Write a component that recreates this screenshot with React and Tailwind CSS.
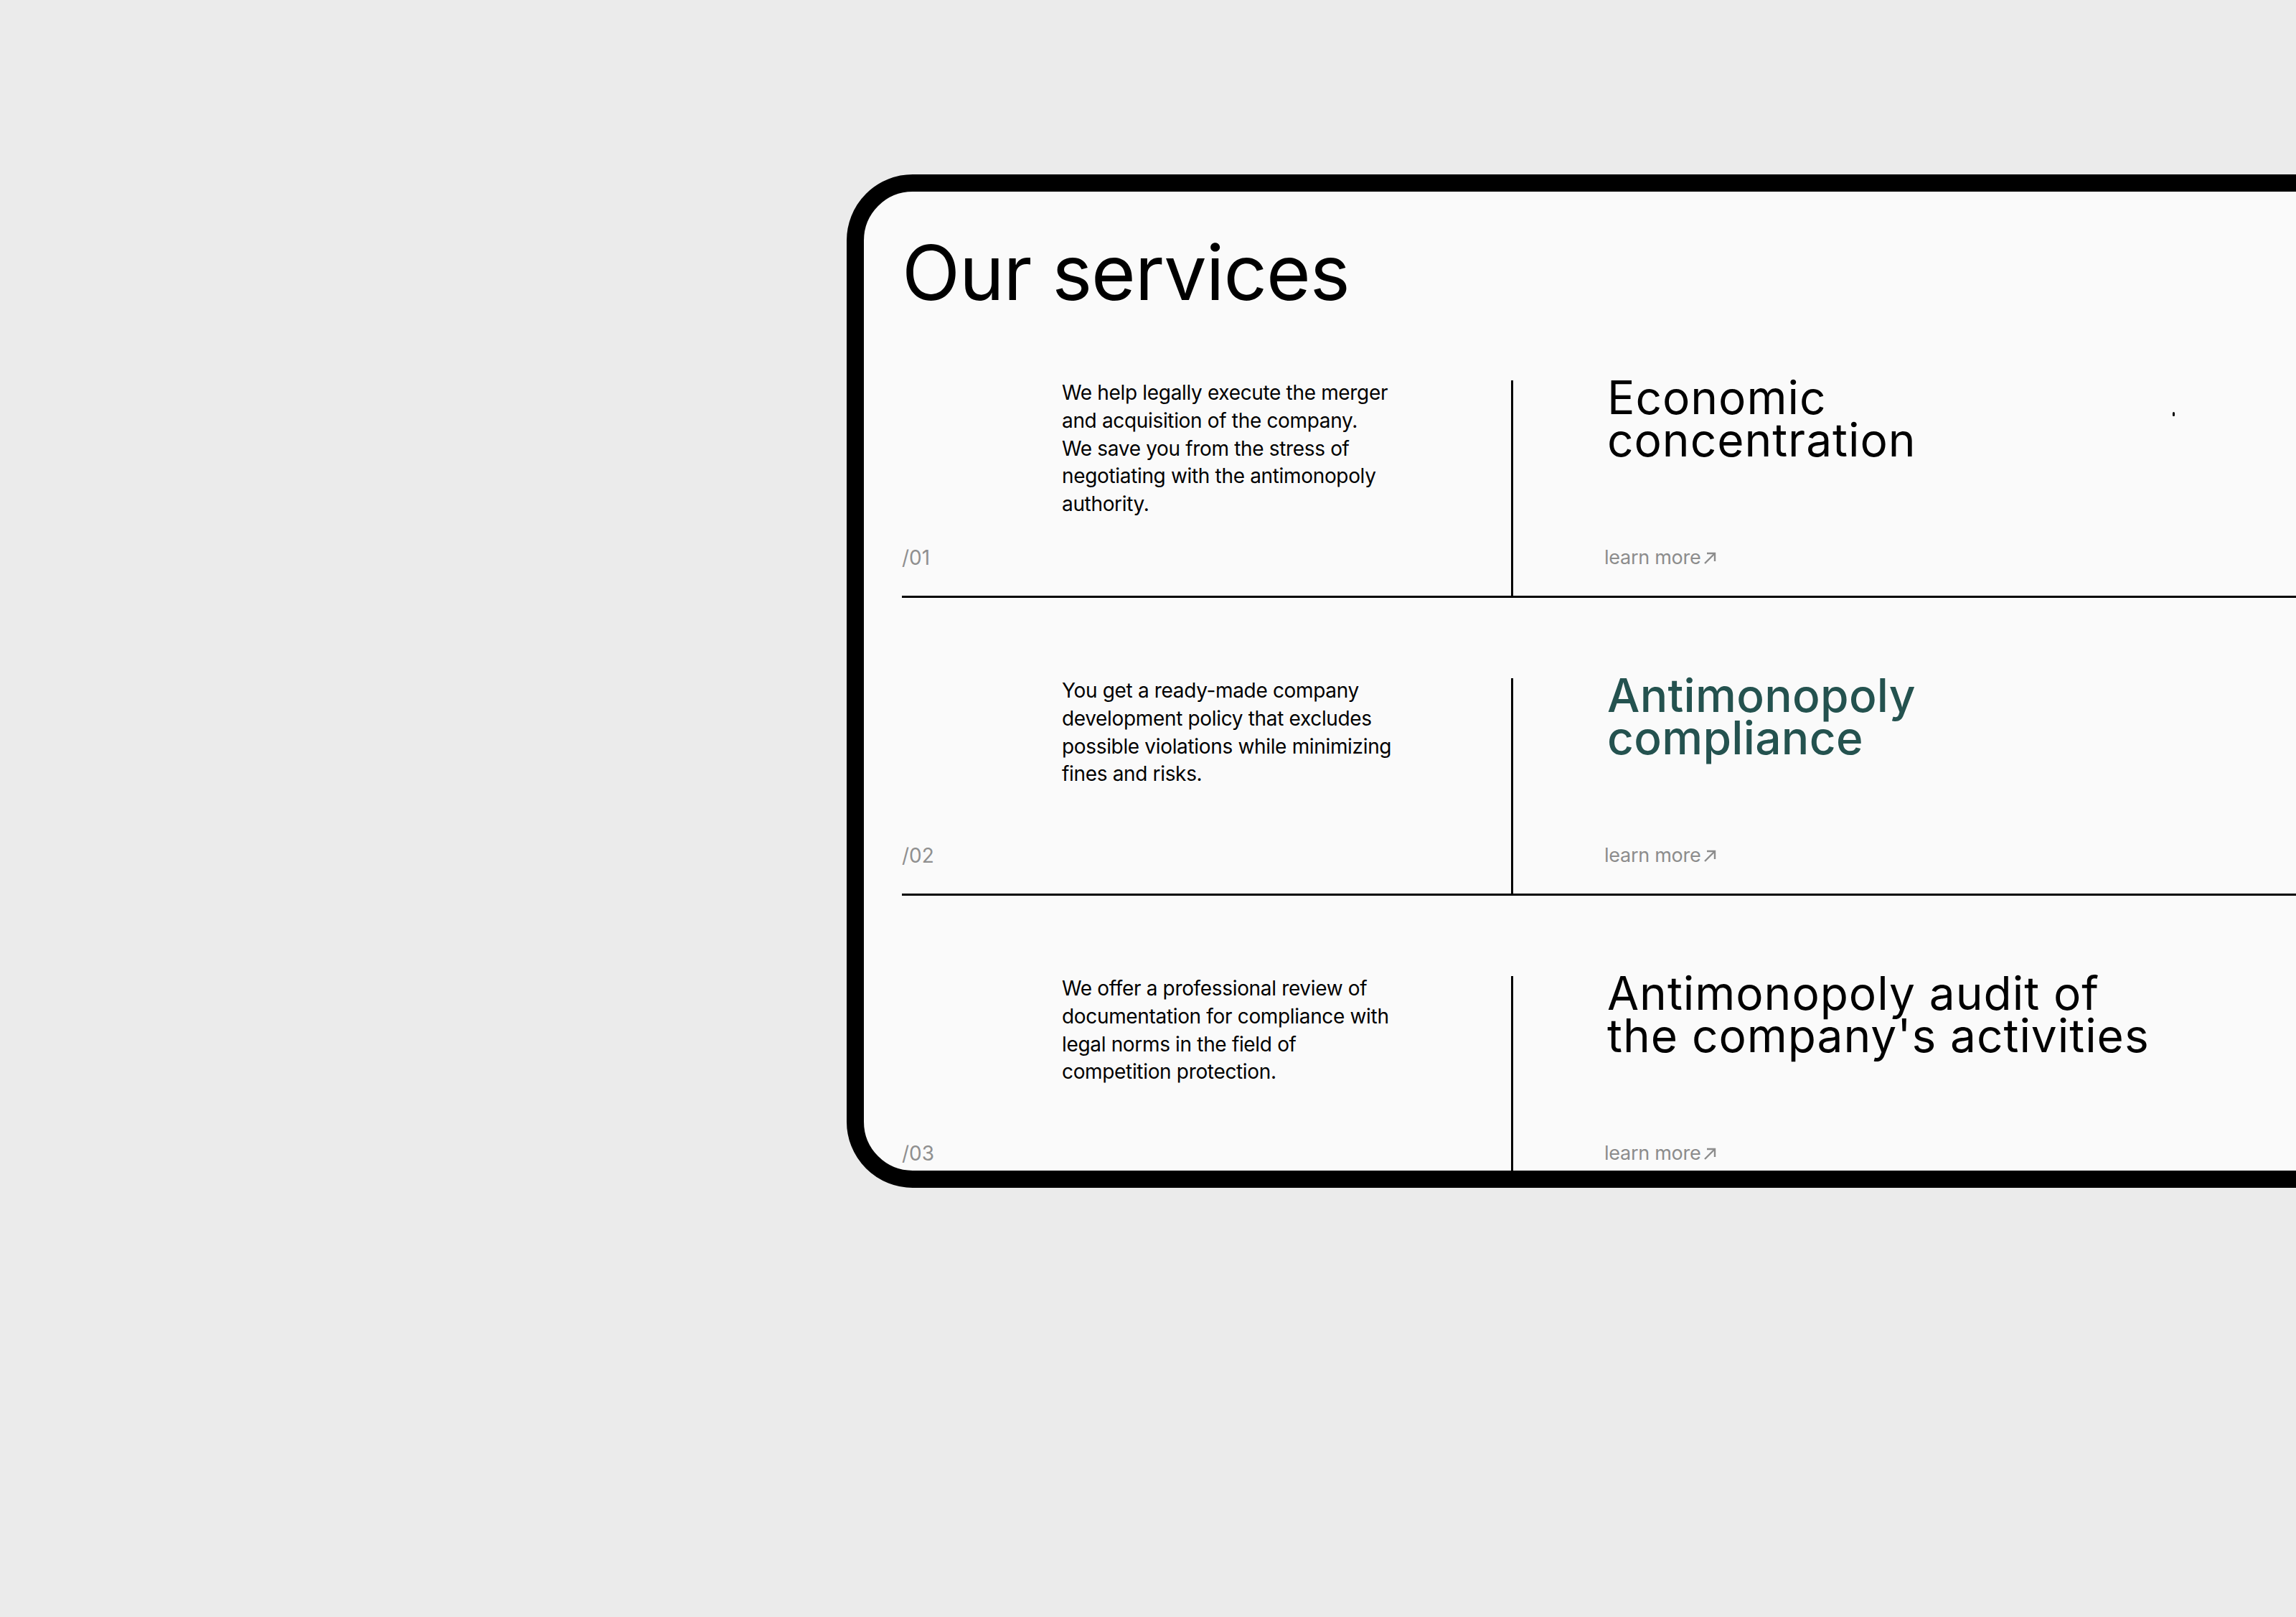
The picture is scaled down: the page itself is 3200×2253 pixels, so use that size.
const services = [
  {
    num: '/01',
    text: ['We help legally execute the merger', 'and acquisition of the company.', 'We save you from the stress of', 'negotiating with the antimonopoly', 'authority.'],
    title: ['Economic', 'concentration'],
    accent: false,
  },
  {
    num: '/02',
    text: ['You get a ready-made company', 'development policy that excludes', 'possible violations while minimizing', 'fines and risks.'],
    title: ['Antimonopoly', 'compliance'],
    accent: true,
  },
  {
    num: '/03',
    text: ['We offer a professional review of', 'documentation for compliance with', 'legal norms in the field of', 'competition protection.'],
    title: ['Antimonopoly audit of', "the company's activities"],
    accent: false,
  },
];

function Arrow() {
  return (
    <svg width="22" height="22" viewBox="0 0 22 22" fill="none" stroke="currentColor" strokeWidth="2.4" className="ml-[2px] mt-[2px]">
      <path d="M4 18 18 4" />
      <path d="M7 4h11v11" />
    </svg>
  );
}

function ServiceRow({ item }) {
  return (
    <div className="flex border-b-[3px] border-black">
      <div className="flex h-[300px] w-[849px] shrink-0 flex-col justify-between pb-[34px]">
        <p className="-mt-[2px] ml-[223px] text-[28px] leading-[38.8px] tracking-[-0.012em] text-black whitespace-nowrap">
          {item.text.map((line) => (
            <span key={line} className="block">{line}</span>
          ))}
        </p>
        <span className="text-[28px] leading-[38px] text-[#8f8f8f]">{item.num}</span>
      </div>
      <div className="flex h-[300px] flex-1 flex-col justify-between border-l-[3px] border-black pb-[34px] pl-[131px]">
        <h3
          className={
            item.accent
              ? '-mt-[6px] text-[64px] leading-[59px] font-medium tracking-[0.005em] text-[#24524f] whitespace-nowrap'
              : '-mt-[6px] text-[64px] leading-[59px] font-normal tracking-[0.015em] text-black whitespace-nowrap'
          }
        >
          {item.title.map((line) => (
            <span key={line} className="block">{line}</span>
          ))}
        </h3>
        <a href="#" className="-ml-[4px] flex items-center text-[27px] leading-[38px] tracking-[-0.01em] text-[#8c8c8c]">
          learn more
          <Arrow />
        </a>
      </div>
    </div>
  );
}

export default function App() {
  return (
    <div className="relative h-[2253px] w-[3200px] overflow-hidden bg-[#ebebeb] pt-[243px] pl-[1180px] font-['Inter',sans-serif]">
      <div className="relative h-[1412px] w-[2100px] overflow-hidden rounded-l-[92px] border-[24px] border-black bg-[#fafafa] pt-[60px] pl-[53px]">
        <h2 className="text-[106px] leading-[106px] font-normal tracking-[-0.01em] text-black">Our services</h2>
        <div className="mt-[97px] flex flex-col gap-[112px]">
          {services.map((item) => (
            <ServiceRow key={item.num} item={item} />
          ))}
        </div>
        <span className="absolute left-[1824px] top-[307px] h-[6px] w-[3px] rounded-full bg-black" />
      </div>
    </div>
  );
}
